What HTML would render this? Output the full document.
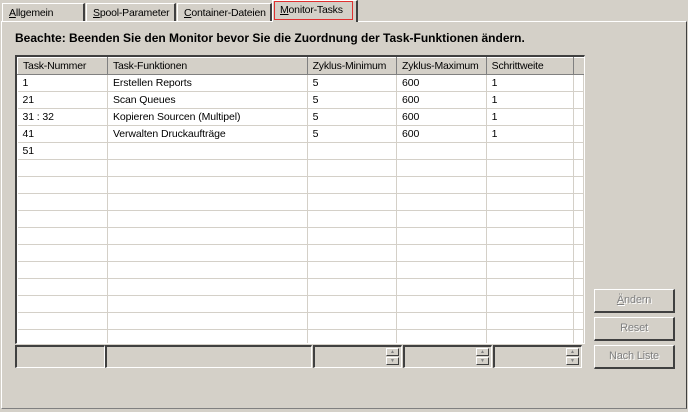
<!DOCTYPE html><html><head><style>
body{margin:0;width:688px;height:412px;background:#d4d0c8;font-family:"Liberation Sans",sans-serif;font-size:11px;position:relative;overflow:hidden;white-space:nowrap}
.a{position:absolute}
.tab{position:absolute;top:3px;height:18px;border-top:1px solid #fff;border-left:1px solid #fff;border-right:2px solid #404040;box-sizing:border-box;padding:3px 0 0 6px;color:#000;font-size:10.5px;letter-spacing:-0.2px}
.panel{left:1px;top:21px;width:686px;height:388px;border-top:1px solid #fff;border-left:1px solid #fff;border-right:1px solid #404040;border-bottom:1px solid #808080;box-sizing:border-box}
.tbl{left:15px;top:55px;width:570px;height:289px;border-top:2px solid #404040;border-left:2px solid #404040;border-right:1px solid #fff;border-bottom:1px solid #fff;box-sizing:border-box;background:#fff;overflow:hidden}
table{border-collapse:collapse;table-layout:fixed}
td{height:16px;line-height:16px;border-right:1px solid #d4d0c8;border-bottom:1px solid #d4d0c8;padding:0 0 0 5px;white-space:nowrap;overflow:hidden;font-size:10.5px;letter-spacing:-0.1px}
th{height:16px;line-height:16px;background:#d4d0c8;font-weight:normal;text-align:left;padding:0 0 0 5px;border-top:1px solid #fff;border-left:1px solid #fff;border-right:1px solid #808080;border-bottom:1px solid #808080;font-size:10.5px;letter-spacing:-0.2px;white-space:nowrap;overflow:hidden}
.f{position:absolute;top:345px;height:23px;border-top:2px solid #404040;border-left:2px solid #404040;border-right:1px solid #fff;border-bottom:1px solid #fff;box-sizing:border-box}
.sp{position:absolute;right:2px;width:13px;height:8px;border:1px solid;border-color:#fff #404040 #404040 #fff;box-sizing:border-box;font-size:5px;color:#808080;text-align:center;line-height:6px}
.b{position:absolute;left:594px;width:81px;height:24px;border-top:1px solid #fff;border-left:1px solid #fff;border-right:2px solid #404040;border-bottom:2px solid #404040;box-sizing:border-box;color:#808080;text-align:center;line-height:21px;text-shadow:1px 1px 0 #fff;font-size:11px;letter-spacing:-0.2px}
</style></head><body>
<div class="a panel"></div>
<div class="tab" style="left:2px;width:83px"><u>A</u>llgemein</div>
<div class="tab" style="left:86px;width:90px"><u>S</u>pool-Parameter</div>
<div class="tab" style="left:177px;width:95px"><u>C</u>ontainer-Dateien</div>
<div class="a" style="left:272px;top:0;width:86px;height:22px;background:#d4d0c8;border-top:1px solid #fff;border-left:1px solid #fff;border-right:2px solid #404040;box-sizing:border-box"></div>
<div class="a" style="left:274px;top:1px;width:79px;height:19px;border:1px solid #e03030;box-sizing:border-box;padding:2px 0 0 5px;font-size:10.5px;letter-spacing:-0.2px"><u>M</u>onitor-Tasks</div>
<div class="a" style="left:15px;top:31px;font-weight:bold;font-size:12px">Beachte: Beenden Sie den Monitor bevor Sie die Zuordnung der Task-Funktionen ändern.</div>
<div class="a tbl"><table>
<colgroup><col style="width:91px"><col style="width:203px"><col style="width:90px"><col style="width:90px"><col style="width:89px"><col style="width:10px"></colgroup>
<tr><th>Task-Nummer</th><th>Task-Funktionen</th><th>Zyklus-Minimum</th><th>Zyklus-Maximum</th><th>Schrittweite</th><th style="border-right:none"></th></tr>
<tr><td>1</td><td>Erstellen Reports</td><td>5</td><td>600</td><td>1</td><td></td></tr>
<tr><td>21</td><td>Scan Queues</td><td>5</td><td>600</td><td>1</td><td></td></tr>
<tr><td>31 : 32</td><td>Kopieren Sourcen (Multipel)</td><td>5</td><td>600</td><td>1</td><td></td></tr>
<tr><td>41</td><td>Verwalten Druckaufträge</td><td>5</td><td>600</td><td>1</td><td></td></tr>
<tr><td>51</td><td></td><td></td><td></td><td></td><td></td></tr>
<tr><td></td><td></td><td></td><td></td><td></td><td></td></tr>
<tr><td></td><td></td><td></td><td></td><td></td><td></td></tr>
<tr><td></td><td></td><td></td><td></td><td></td><td></td></tr>
<tr><td></td><td></td><td></td><td></td><td></td><td></td></tr>
<tr><td></td><td></td><td></td><td></td><td></td><td></td></tr>
<tr><td></td><td></td><td></td><td></td><td></td><td></td></tr>
<tr><td></td><td></td><td></td><td></td><td></td><td></td></tr>
<tr><td></td><td></td><td></td><td></td><td></td><td></td></tr>
<tr><td></td><td></td><td></td><td></td><td></td><td></td></tr>
<tr><td></td><td></td><td></td><td></td><td></td><td></td></tr>
<tr><td></td><td></td><td></td><td></td><td></td><td></td></tr>
<tr><td></td><td></td><td></td><td></td><td></td><td></td></tr>
</table></div>
<div class="f" style="left:15px;width:90px"></div>
<div class="f" style="left:105px;width:207px"></div>
<div class="f" style="left:313px;width:89px"><div class="sp" style="top:1px">▲</div><div class="sp" style="top:10px">▼</div></div>
<div class="f" style="left:403px;width:89px"><div class="sp" style="top:1px">▲</div><div class="sp" style="top:10px">▼</div></div>
<div class="f" style="left:493px;width:89px"><div class="sp" style="top:1px">▲</div><div class="sp" style="top:10px">▼</div></div>
<div class="b" style="top:289px"><u>Ä</u>ndern</div>
<div class="b" style="top:317px">Reset</div>
<div class="b" style="top:345px">Nach Liste</div>
</body></html>
